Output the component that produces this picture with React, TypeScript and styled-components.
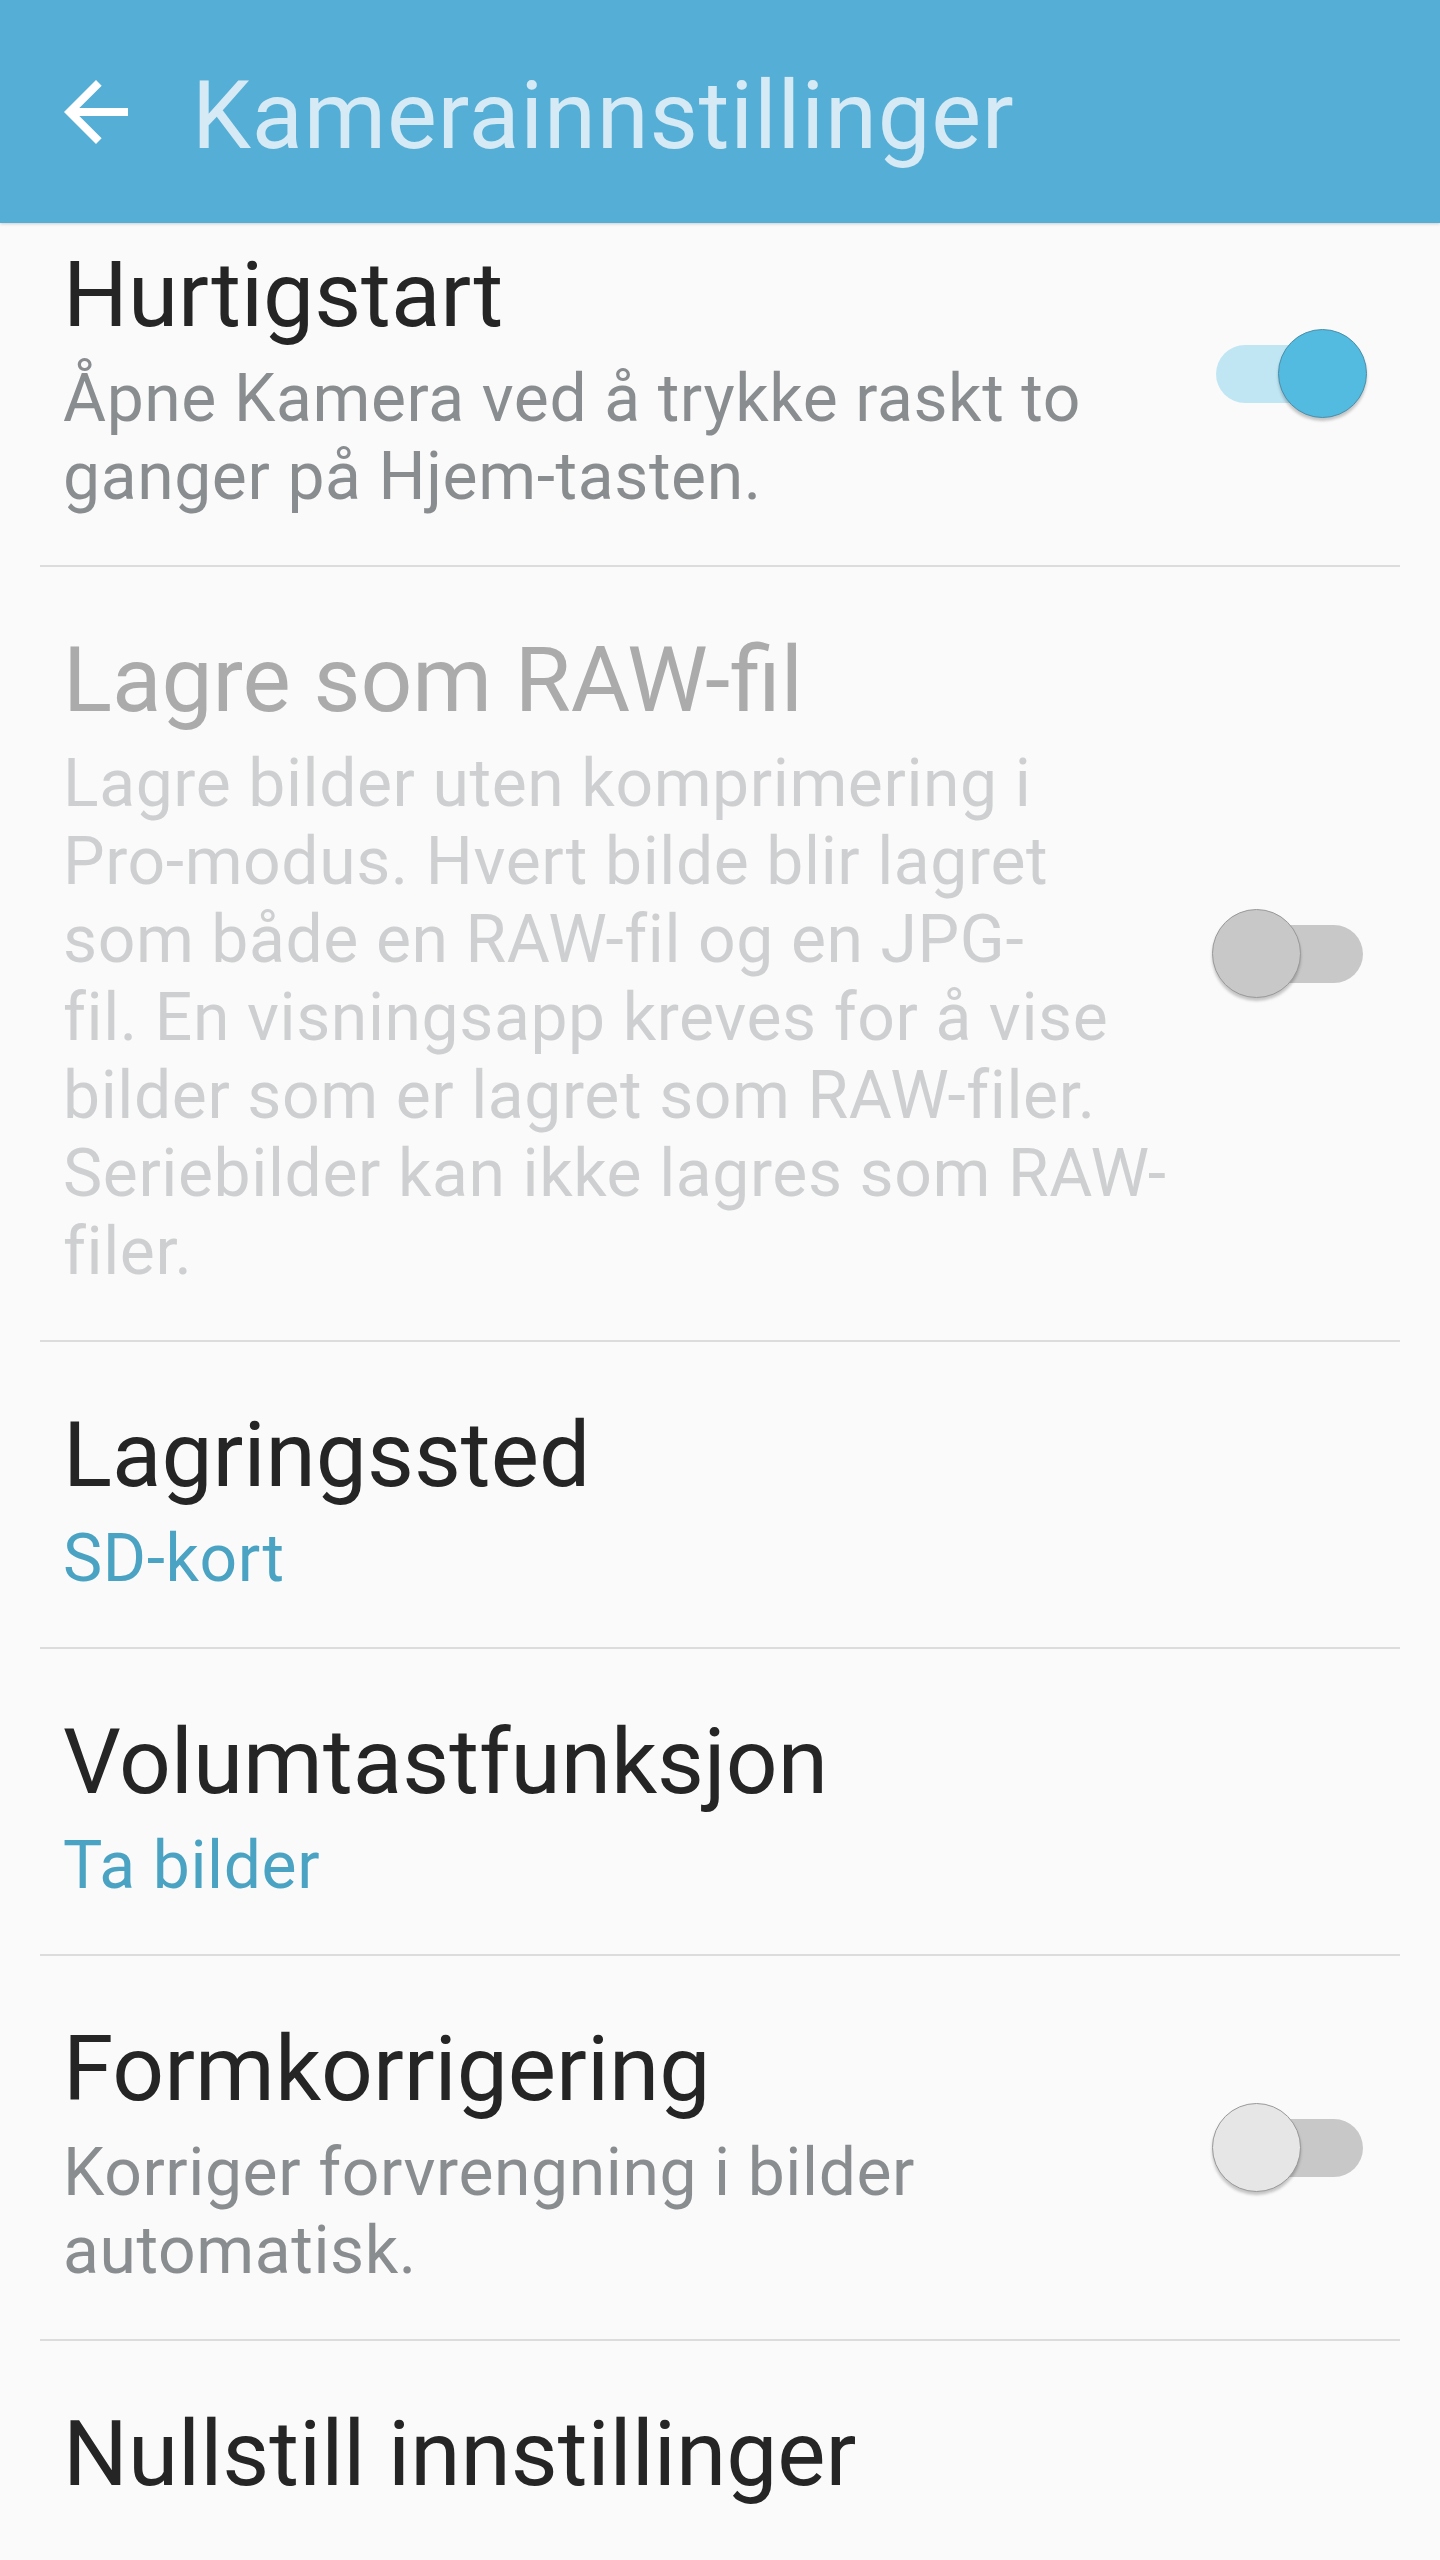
import React from "react";
import styled, { createGlobalStyle } from "styled-components";

const GlobalStyle = createGlobalStyle`
  html, body {
    margin: 0;
    padding: 0;
    background: #fafafa;
  }
  body {
    font-family: Roboto, "Noto Sans", "Liberation Sans", sans-serif;
    -webkit-font-smoothing: antialiased;
  }
`;

const Screen = styled.div`
  width: 1440px;
  height: 2560px;
  background: #fafafa;
  overflow: hidden;
`;

const AppBar = styled.header`
  position: sticky;
  top: 0;
  z-index: 2;
  height: 223px;
  background: #54aed5;
  display: flex;
  align-items: center;
  padding-left: 48px;
  gap: 48px;
  box-shadow: 0 1px 3px rgba(0, 0, 0, 0.18);
`;

const BackButton = styled.svg`
  width: 96px;
  height: 96px;
  flex: none;
`;

const AppTitle = styled.h1`
  margin: 9px 0 0;
  font-size: 94px;
  line-height: 110px;
  font-weight: 400;
  letter-spacing: 0.8px;
  color: #d5eaf4;
  white-space: nowrap;
`;

const List = styled.main`
  position: relative;
  z-index: 1;
  margin-top: -41px;
  display: flex;
  flex-direction: column;
`;

const Row = styled.section`
  display: flex;
  align-items: center;
  gap: 40px;
  margin: 0 40px;
  padding: 59px 33px 49px 23px;
  border-bottom: 2px solid #dcdcdc;

  &:last-child {
    border-bottom: none;
    padding-bottom: 80px;
  }
`;

const TextCol = styled.div`
  flex: 1;
  min-width: 0;
`;

const Title = styled.div<{ $disabled?: boolean }>`
  font-size: 91px;
  line-height: 108px;
  color: ${(p) => (p.$disabled ? "#ababab" : "#252525")};
  white-space: nowrap;
`;

const Desc = styled.div<{ $tone?: "normal" | "disabled" | "value" }>`
  margin-top: 11px;
  font-size: 66px;
  line-height: 78px;
  letter-spacing: 0.6px;
  white-space: nowrap;
  color: ${(p) =>
    p.$tone === "disabled" ? "#cecfd1" : p.$tone === "value" ? "#4ba3c3" : "#8a8d8f"};
`;

const Line = styled.span`
  display: block;
`;

const Switch = styled.div`
  flex: none;
  width: 155px;
  height: 92px;
  margin-top: -10px;
  display: grid;
  align-items: center;
`;

const Track = styled.div<{ $on: boolean }>`
  grid-area: 1 / 1;
  margin: 0 4px;
  height: 58px;
  border-radius: 29px;
  background: ${(p) => (p.$on ? "#c0e6f4" : "#c8c8c8")};
`;

const Thumb = styled.div<{ $on: boolean; $disabled?: boolean }>`
  grid-area: 1 / 1;
  justify-self: ${(p) => (p.$on ? "end" : "start")};
  width: 89px;
  height: 89px;
  box-sizing: border-box;
  border-radius: 50%;
  background: ${(p) => (p.$on ? "#53bae0" : p.$disabled ? "#c8c8c8" : "#e6e6e6")};
  border: 1.5px solid ${(p) => (p.$on ? "#4a8fab" : "#999999")};
  box-shadow: 0 3px 3px rgba(0, 0, 0, 0.22);
`;

type ToggleProps = { on: boolean; disabled?: boolean };

const Toggle = ({ on, disabled }: ToggleProps) => (
  <Switch>
    <Track $on={on} />
    <Thumb $on={on} $disabled={disabled} />
  </Switch>
);

type Item = {
  title: string;
  lines?: string[];
  tone?: "normal" | "disabled" | "value";
  toggle?: ToggleProps;
  disabled?: boolean;
};

const items: Item[] = [
  {
    title: "Hurtigstart",
    lines: ["Åpne Kamera ved å trykke raskt to", "ganger på Hjem-tasten."],
    toggle: { on: true },
  },
  {
    title: "Lagre som RAW-fil",
    disabled: true,
    tone: "disabled",
    lines: [
      "Lagre bilder uten komprimering i",
      "Pro-modus. Hvert bilde blir lagret",
      "som både en RAW-fil og en JPG-",
      "fil. En visningsapp kreves for å vise",
      "bilder som er lagret som RAW-filer.",
      "Seriebilder kan ikke lagres som RAW-",
      "filer.",
    ],
    toggle: { on: false, disabled: true },
  },
  { title: "Lagringssted", lines: ["SD-kort"], tone: "value" },
  { title: "Volumtastfunksjon", lines: ["Ta bilder"], tone: "value" },
  {
    title: "Formkorrigering",
    lines: ["Korriger forvrengning i bilder", "automatisk."],
    toggle: { on: false },
  },
  { title: "Nullstill innstillinger" },
];

export default function App() {
  return (
    <Screen>
      <GlobalStyle />
      <AppBar>
        <BackButton viewBox="0 0 24 24" aria-label="Tilbake">
          <path
            fill="#ffffff"
            d="M20 11H7.83l5.59-5.59L12 4l-8 8 8 8 1.41-1.41L7.83 13H20v-2z"
          />
        </BackButton>
        <AppTitle>Kamerainnstillinger</AppTitle>
      </AppBar>
      <List>
        {items.map((it) => (
          <Row key={it.title}>
            <TextCol>
              <Title $disabled={it.disabled}>{it.title}</Title>
              {it.lines && (
                <Desc $tone={it.tone ?? "normal"}>
                  {it.lines.map((l) => (
                    <Line key={l}>{l}</Line>
                  ))}
                </Desc>
              )}
            </TextCol>
            {it.toggle && <Toggle {...it.toggle} />}
          </Row>
        ))}
      </List>
    </Screen>
  );
}
